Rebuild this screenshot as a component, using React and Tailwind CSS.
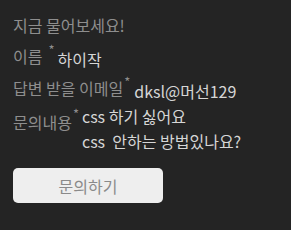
export default function App() {
  return (
    <div className="w-[291px] h-[230px] bg-[#242424] pl-[13px] pt-[14px] font-['Noto_Sans_CJK_KR',sans-serif] text-[16px] text-[#8e8e8e]">
      <h2 className="leading-[22px]">지금 물어보세요!</h2>

      <div className="mt-[9px] flex items-start">
        <span className="leading-[22px]">이름</span>
        <span className="ml-[6px] -mt-[2px] text-[13px] leading-none">*</span>
        <span className="ml-[3px] mt-[3px] leading-[22px] text-[#d6d6d6]">하이작</span>
      </div>

      <div className="mt-[7px] flex items-start">
        <span className="leading-[22px]">답변 받을 이메일</span>
        <span className="ml-[1px] -mt-[2px] text-[13px] leading-none">*</span>
        <span className="ml-[4px] mt-[3px] leading-[22px] text-[#d6d6d6]">dksl@머선129</span>
      </div>

      <div className="mt-[2px] flex items-start">
        <span className="mt-[7px] leading-[22px]">문의내용</span>
        <span className="ml-[1px] mt-[3px] text-[13px] leading-none">*</span>
        <span className="ml-[3px] whitespace-pre leading-[25px] text-[#d6d6d6]">{"css 하기 싫어요\ncss  안하는 방법있나요?"}</span>
      </div>

      <button className="mt-[14px] w-[150px] h-[35px] rounded-[5px] bg-[#eeeeee] text-[16px] text-[#8a8a8a]">
        문의하기
      </button>
    </div>
  );
}
